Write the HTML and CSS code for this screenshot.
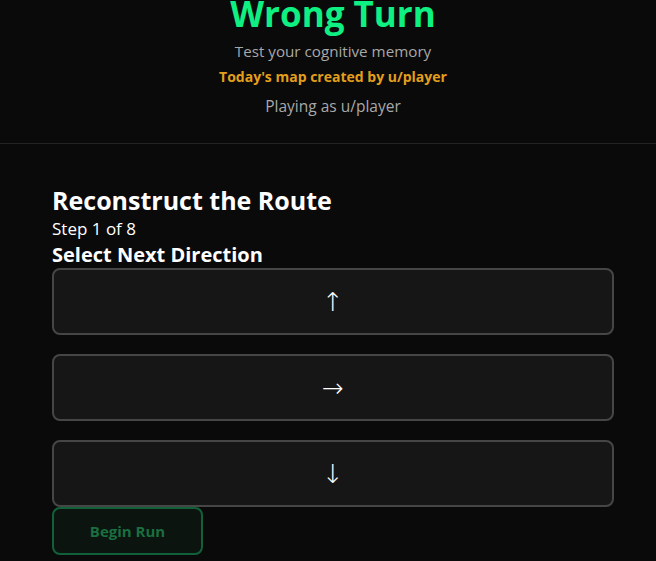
FILE: index.html
```html
<!DOCTYPE html>
<html lang="en">
<head>
    <meta charset="UTF-8">
    <meta name="viewport" content="width=device-width, initial-scale=1.0">
    <title>Wrong Turn</title>
    <link rel="stylesheet" href="styles.css">
</head>
<body>
    <header class="header">
        <h1 class="title">Wrong Turn</h1>
        <div class="subtitle">Test your cognitive memory</div>
        <div class="creator">Today's map created by u/player</div>
        <div class="player">Playing as u/player</div>
    </header>

    <main class="game">
        <h2 class="game-title">Reconstruct the Route</h2>
        <div class="step">Step 1 of 8</div>
        <h3 class="prompt">Select Next Direction</h3>

        <div class="directions">
            <button class="dir-btn" data-dir="up">&uarr;</button>
            <button class="dir-btn" data-dir="right">&rarr;</button>
            <button class="dir-btn" data-dir="down">&darr;</button>
        </div>

        <button class="start-btn" disabled>Begin Run</button>
    </main>
</body>
</html>
```

FILE: styles.css
```css
:root {
    --bg-color: #0a0a0a;
    --panel-color: #161616;
    --border-color: #464646;
    --accent-color: #0ff082;
    --gold-color: #e39f1c;
    --muted-color: #a8a8a8;
}

body {
    font-family: 'Open Sans', 'Noto Sans', sans-serif;
    background: var(--bg-color);
    color: white;
    margin: 0;
    min-height: 100vh;
}

.header {
    text-align: center;
    padding: 0 0 26px 10px;
    border-bottom: 1px solid #242424;
    margin-top: -7px;
}

.title {
    color: var(--accent-color);
    font-size: 35px;
    font-weight: 700;
    margin: 0 0 5px;
    line-height: 1.2;
}

.subtitle {
    color: var(--muted-color);
    font-size: 15.2px;
    line-height: 22px;
}

.creator {
    color: var(--gold-color);
    font-size: 14px;
    font-weight: 700;
    line-height: 22px;
    margin-top: 4px;
}

.player {
    color: var(--muted-color);
    font-size: 15.5px;
    line-height: 22px;
    margin-top: 7px;
}

.game {
    padding: 40px 42px 0 52px;
}

.game-title {
    font-size: 25px;
    font-weight: 700;
    margin: 0;
    line-height: 32px;
}

.step {
    font-size: 17px;
    line-height: 24px;
    margin-top: 1px;
}

.prompt {
    font-size: 20px;
    font-weight: 700;
    margin: 1px 0 0;
    line-height: 26px;
}

.directions {
    display: flex;
    flex-direction: column;
    gap: 19px;
}

.dir-btn {
    background: var(--panel-color);
    border: 2px solid var(--border-color);
    border-radius: 8px;
    color: white;
    font-family: 'DejaVu Sans', sans-serif;
    font-size: 26px;
    font-weight: 300;
    height: 67px;
    width: 100%;
    padding: 0;
    cursor: pointer;
}

.dir-btn:hover {
    border-color: var(--accent-color);
}

.start-btn {
    display: block;
    width: 151px;
    height: 48px;
    background: #0b140e;
    border: 2px solid #12603a;
    border-radius: 8px;
    color: #1a6e40;
    font-family: inherit;
    font-size: 15px;
    font-weight: 700;
}
```
